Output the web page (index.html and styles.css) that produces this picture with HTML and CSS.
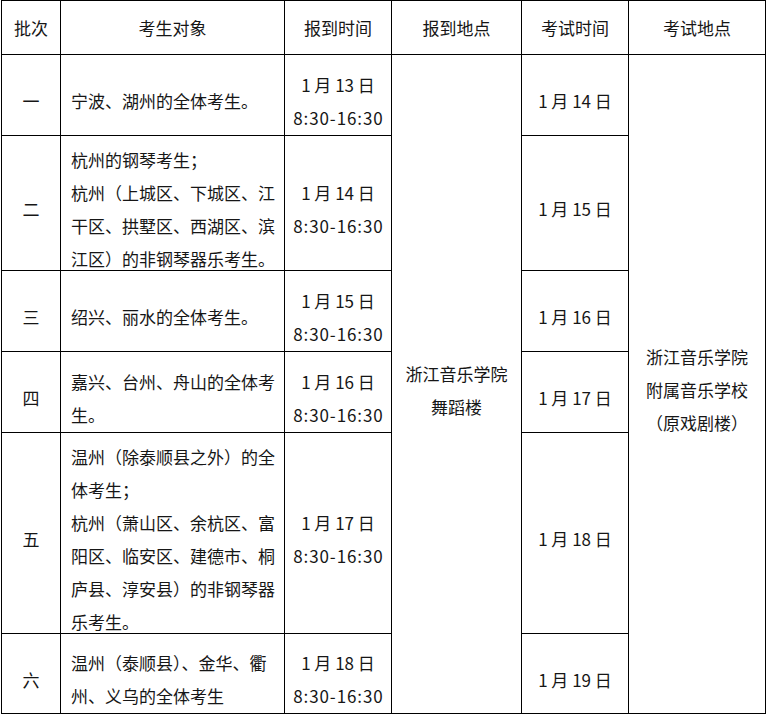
FILE: index.html
```html
<!DOCTYPE html>
<html lang="zh-CN">
<head>
<meta charset="utf-8">
<title>考试安排</title>
<link rel="stylesheet" href="styles.css">
</head>
<body>
<div class="sheet">
  <div class="cell head"><div>批次</div></div>
  <div class="cell head"><div>考生对象</div></div>
  <div class="cell head"><div>报到时间</div></div>
  <div class="cell head"><div>报到地点</div></div>
  <div class="cell head"><div>考试时间</div></div>
  <div class="cell head"><div>考试地点</div></div>

  <div class="cell"><div>一</div></div>
  <div class="cell who"><div>宁波、湖州的全体考生。</div></div>
  <div class="cell"><div>1 月 13 日<br><span class="hrs">8:30-16:30</span></div></div>
  <div class="cell span-all"><div>浙江音乐学院<br>舞蹈楼</div></div>
  <div class="cell"><div>1 月 14 日</div></div>
  <div class="cell span-all"><div>浙江音乐学院<br>附属音乐学校<br>（原戏剧楼）</div></div>

  <div class="cell"><div>二</div></div>
  <div class="cell who"><div>杭州的钢琴考生；<br>杭州（上城区、下城区、江<br>干区、拱墅区、西湖区、滨<br>江区）的非钢琴器乐考生。</div></div>
  <div class="cell"><div>1 月 14 日<br><span class="hrs">8:30-16:30</span></div></div>
  <div class="cell"><div>1 月 15 日</div></div>

  <div class="cell"><div>三</div></div>
  <div class="cell who"><div>绍兴、丽水的全体考生。</div></div>
  <div class="cell"><div>1 月 15 日<br><span class="hrs">8:30-16:30</span></div></div>
  <div class="cell"><div>1 月 16 日</div></div>

  <div class="cell"><div>四</div></div>
  <div class="cell who"><div>嘉兴、台州、舟山的全体考<br>生。</div></div>
  <div class="cell"><div>1 月 16 日<br><span class="hrs">8:30-16:30</span></div></div>
  <div class="cell"><div>1 月 17 日</div></div>

  <div class="cell"><div>五</div></div>
  <div class="cell who"><div>温州（除泰顺县之外）的全<br>体考生；<br>杭州（萧山区、余杭区、富<br>阳区、临安区、建德市、桐<br>庐县、淳安县）的非钢琴器<br>乐考生。</div></div>
  <div class="cell"><div>1 月 17 日<br><span class="hrs">8:30-16:30</span></div></div>
  <div class="cell"><div>1 月 18 日</div></div>

  <div class="cell"><div>六</div></div>
  <div class="cell who"><div>温州（泰顺县）、金华、衢<br>州、义乌的全体考生</div></div>
  <div class="cell"><div>1 月 18 日<br><span class="hrs">8:30-16:30</span></div></div>
  <div class="cell"><div>1 月 19 日</div></div>
</div>
</body>
</html>
```

FILE: styles.css
```css
html, body {
  margin: 0;
  padding: 0;
  background: #fff;
}

.sheet {
  display: grid;
  grid-template-columns: 58px 223px 106px 129px 106px 136px;
  grid-template-rows: 53px 80px 134px 80px 80px 200px 79px;
  gap: 1px;
  padding: 1px;
  background: #000;
  width: max-content;
  margin-left: 1px;
  font-family: "Noto Sans CJK SC", "Noto Sans", sans-serif;
  font-size: 17px;
  line-height: 33px;
  color: #161616;
}

.cell {
  background: #fff;
  display: flex;
  align-items: center;
  justify-content: center;
  text-align: center;
  padding-top: 11px;
  box-sizing: border-box;
  min-height: 0;
  white-space: nowrap;
}

.cell.head {
  padding-top: 0;
}

.cell.who {
  justify-content: flex-start;
  text-align: left;
  padding-left: 10px;
}

.span-all {
  grid-row: span 6;
}

.hrs {
  letter-spacing: 0.9px;
  margin-right: -0.9px;
}
```
